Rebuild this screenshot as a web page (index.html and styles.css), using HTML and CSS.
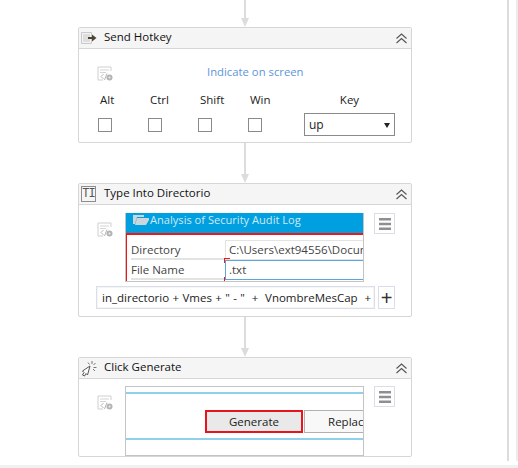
FILE: index.html
```html
<!DOCTYPE html>
<html>
	<head>
		<meta charset="utf-8">
		<title>Sequence</title>
		<link rel="stylesheet" href="styles.css">
	</head>
	<body>
		<svg class="defs" width="0" height="0">
			<symbol id="code" viewBox="0 0 16 15">
				<path d="M14 5V1H1v13h5" fill="none" stroke="#cfcfcf"/>
				<path d="M3 4h9M3 6.500h6" stroke="#d4d4d4"/>
				<path d="M6.500 8 4 10.500 6.500 13M10 7.500 7.500 14" fill="none" stroke="#b5b5b5"/>
				<circle cx="12.500" cy="11.500" r="3" fill="#b4b4b4"/>
				<circle cx="12.500" cy="11.500" r="1" fill="#eee"/>
			</symbol>
			<symbol id="chevrons" viewBox="0 0 11 11">
				<path d="M.5 5.500 5.500 1l5 4.500M.5 10 5.500 5.500l5 4.500" fill="none" stroke="#555" stroke-width="1.100"/>
			</symbol>
			<symbol id="menu" viewBox="0 0 12 12">
				<path d="M0 0h12v2.500H0zM0 4.800h12v2.500H0zM0 9.500h12V12H0z" fill="#8f8f8f"/>
			</symbol>
		</svg>

		<div class="page">
			<main class="flow">
				<div class="link first"></div>

				<section class="card">
					<header class="card-head">
						<svg class="head-icon" width="16" height="12" viewBox="0 0 16 12">
							<path d="M.5.500h10v11H.5z" fill="#f4f4f4" stroke="#c9c9c9"/>
							<path d="M2 2h7v8H2z" fill="#dedede"/>
							<path d="M7 6h5" stroke="#4d4638" stroke-width="2"/>
							<path d="M11 2.500 15.500 6 11 9.500z" fill="#4d4638"/>
						</svg>
						<span class="card-title">Send Hotkey</span>
						<svg class="collapse" width="11" height="11"><use href="#chevrons"/></svg>
					</header>
					<div class="hotkey-body">
						<div class="indicate-row">
							<svg class="code-icon" width="16" height="15"><use href="#code"/></svg>
							<a class="indicate" href="#">Indicate on screen</a>
						</div>
						<div class="keys">
							<div class="key-col"><span>Alt</span><i class="check"></i></div>
							<div class="key-col"><span>Ctrl</span><i class="check"></i></div>
							<div class="key-col"><span>Shift</span><i class="check"></i></div>
							<div class="key-col"><span>Win</span><i class="check"></i></div>
							<div class="key-pick">
								<span>Key</span>
								<div class="select">up<b class="caret"></b></div>
							</div>
						</div>
					</div>
				</section>

				<div class="link"></div>

				<section class="card">
					<header class="card-head">
						<span class="ti-icon">TI</span>
						<span class="card-title">Type Into Directorio</span>
						<svg class="collapse" width="11" height="11"><use href="#chevrons"/></svg>
					</header>
					<div class="shot-row type-row">
						<svg class="code-icon" width="16" height="15"><use href="#code"/></svg>
						<div class="shot">
							<div class="sap-title">
								<svg width="16" height="12" viewBox="0 0 16 12">
									<path d="M0 1h11v2H4L2 10H0zM4 4h12v2l-3 5H2z" fill="#c9d6dc"/>
								</svg>
								Analysis of Security Audit Log
							</div>
							<div class="sap-form">
								<div class="sap-row">
									<span class="sap-label">Directory</span>
									<span class="sap-field">C:\Users\ext94556\Documents</span>
								</div>
								<div class="sap-row">
									<span class="sap-label">File Name</span>
									<span class="sap-field active">.txt</span>
								</div>
							</div>
						</div>
						<button class="side-btn"><svg width="12" height="12"><use href="#menu"/></svg></button>
					</div>
					<div class="expr-row">
						<div class="expr">in_directorio + Vmes + " - " &nbsp;+ &nbsp;VnombreMesCap &nbsp;+</div>
						<button class="plus">+</button>
					</div>
				</section>

				<div class="link"></div>

				<section class="card">
					<header class="card-head">
						<svg class="head-icon" width="16" height="17" viewBox="0 0 16 17">
							<path d="M9 6 1.500 11 3 12.500 1.500 15l2 1L5 13.500 6.500 15z" fill="#fff" stroke="#555" stroke-linejoin="round"/>
							<path d="M11 1v3M14.500 3 12.500 5M15.500 7.500h-3M14 11l-2-2M7 2.500 8.500 4.500" stroke="#777"/>
						</svg>
						<span class="card-title">Click Generate</span>
						<svg class="collapse" width="11" height="11"><use href="#chevrons"/></svg>
					</header>
					<div class="shot-row click-row">
						<svg class="code-icon" width="16" height="15"><use href="#code"/></svg>
						<div class="shot plain">
							<div class="toolbar">
								<span class="tool-btn selected">Generate</span>
								<span class="tool-btn">Replace</span>
							</div>
						</div>
						<button class="side-btn"><svg width="12" height="12"><use href="#menu"/></svg></button>
					</div>
				</section>
			</main>
			<aside class="rail"></aside>
		</div>
		<div class="bottom-bar"></div>
	</body>
</html>
```

FILE: styles.css
```css
*{margin: 0; padding: 0; box-sizing: border-box;}
html,body{height: 468px; overflow: hidden; background: #fff;}
body{font-family: "Open Sans", "Noto Sans", "Liberation Sans", sans-serif; font-size: 12px; color: #222;}
.defs{position: absolute;}

.page{display: flex; height: 461px; overflow: hidden;}
.flow{width: 507px; padding-left: 78px; display: flex; flex-direction: column; flex: none;}
.rail{width: 11px; border-left: 2px solid #dcdcdc; position: relative;}
.rail::after{content: ""; position: absolute; top: 0; right: 0; width: 2px; height: 100%; background: #ececec;}
.bottom-bar{height: 3px; margin-top: 4px; background: #f0f0f0;}

/* connector between activities */
.link{width: 334px; height: 40px; flex: none; position: relative;}
.link.first{height: 27px;}
.link::before{content: ""; position: absolute; left: 166px; top: 0; bottom: 8px; width: 2px; background: #dcdcdc;}
.link::after{content: ""; position: absolute; left: 163px; bottom: 0; border: 4.500px solid transparent; border-bottom: 0; border-top: 9px solid #dcdcdc;}

.card{width: 334px; flex: none; border: 1px solid #d6d6d6; border-radius: 2px; background: #fff;}
.card-head{height: 21px; background: #f5f5f5; border-bottom: 1px solid #d6d6d6; display: flex; align-items: center; padding: 0 4px 0 2px;}
.head-icon{flex: none;}
.card-title{margin-left: 7px; padding-bottom: 4px; font-size: 11.500px; color: #111; flex: 1;}
.collapse{flex: none;}

.ti-icon{width: 15px; height: 16px; border: 1px solid #8d8d8d; font: 12px/14px "Liberation Mono", monospace; color: #555; text-align: center; letter-spacing: -1px; flex: none;}
.ti-icon + .card-title{margin-left: 8px;}

.code-icon{flex: none;}

/* send hotkey */
.hotkey-body{height: 93px; padding: 17px 16px 0 18px;}
.indicate-row{display: flex; align-items: flex-start; height: 22px;}
.indicate{margin: -2px 0 0 94px; font-size: 11.300px; line-height: 15px; color: #5c95d9; text-decoration: none;}
.keys{display: flex; align-items: flex-end; margin-top: 4px; margin-left: 1px;}
.key-col{width: 50px; display: flex; flex-direction: column; align-items: flex-start; font-size: 11.500px;}
.key-col span{margin: 0 0 11px 2px; line-height: 15px;}
.check{display: block; width: 14px; height: 14px; border: 1px solid #8a8a8a; background: #fff; margin-bottom: 4px;}
.key-pick{margin-left: 6px; width: 91px; display: flex; flex-direction: column; align-items: center; font-size: 11.500px;}
.key-pick span{line-height: 15px; margin-bottom: 6px;}
.select{width: 91px; height: 23px; border: 1px solid #8a8a8a; padding-left: 4px; font-size: 12px; line-height: 21px; position: relative;}
.caret{position: absolute; right: 4px; top: 9px; border: 3.500px solid transparent; border-bottom: 0; border-top: 5px solid #222;}

/* rows with a captured screen */
.shot-row{display: flex; align-items: flex-start; padding-left: 18px;}
.type-row{padding-top: 8px;}
.click-row{padding-top: 7px;}
.shot-row .code-icon{margin-top: 9px;}
.shot{width: 239px; height: 69px; margin-left: 12px; background: #fff; border: 1px solid #c4c4c4; border-top: 0; overflow: hidden; flex: none;}
.shot.plain{height: 70px; border-top: 1px solid #c4c4c4;}
.side-btn{width: 21px; height: 21px; margin-left: 10px; background: #fff; border: 1px solid #d9dee8; display: flex; align-items: center; justify-content: center; flex: none;}

.sap-title{height: 20px; background: #009fe0; color: #cfe9f7; font-size: 11.100px; line-height: 13px; padding-left: 7px; display: flex; gap: 1px; white-space: nowrap;}
.sap-title svg{margin-top: 1px; flex: none;}
.sap-form{height: 48px; border-top: 2px solid #f01616; border-left: 2px solid #f01616; padding: 5px 0 0 4px; margin-left: -1px;}
.sap-row{display: flex; height: 20px; font-size: 11.500px; line-height: 19px; color: #444; white-space: nowrap;}
.sap-label{width: 94px; flex: none; border-bottom: 2px solid #e3e3e3;}
.sap-field{flex: 1; padding-left: 3px; border: 1px solid #e3e3e3; border-right: 0; overflow: hidden; line-height: 17px; font-size: 11.500px;}
.sap-field.active{border: 1px solid #5aa7dc; border-right: 0; position: relative; overflow: visible;}
/* red corner ticks of the selection */
.sap-field.active::before,
.sap-field.active::after{content: ""; position: absolute; left: -2px; width: 5px; height: 4px; border: 1px solid #f01616; border-right: 0;}
.sap-field.active::before{top: -3px; border-bottom: 0;}
.sap-field.active::after{bottom: -3px; border-top: 0;}

.expr-row{display: flex; gap: 3px; padding: 4px 0 7px 17px; height: 34px;}
.expr{width: 279px; height: 23px; border: 1px solid #d9dee8; padding-left: 5px; font-size: 11.500px; line-height: 21px; word-spacing: .4px; white-space: nowrap; overflow: hidden; box-shadow: inset 0 0 0 1px #f5f5f5;}
.plus{width: 17px; height: 23px; background: #fff; border: 1px solid #d9dee8; font: 20px/20px "Liberation Sans", sans-serif; color: #333;}

/* click generate screen */
.toolbar{height: 48px; margin-top: 5px; padding-top: 16px; padding-left: 79px; border-top: 2px solid #8fd0ea; border-bottom: 2px solid #8fd0ea; display: flex; gap: 1px; white-space: nowrap;}
.tool-btn{width: 90px; height: 23px; flex: none; border: 1px solid #b0b0b0; background: #f8f8f8; text-align: center; font-size: 11.500px; line-height: 21px;}
.tool-btn.selected{width: 98px; background: #e9e9e9; border: 2px solid #e8141c; line-height: 19px;}
```
